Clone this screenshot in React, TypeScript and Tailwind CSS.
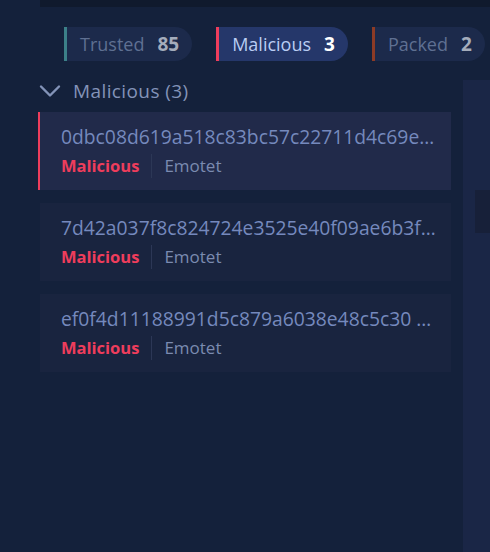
import React from "react";

type Tab = { label: string; count: number; bar: string; active?: boolean };

const tabs: Tab[] = [
  { label: "Trusted", count: 85, bar: "bg-[#3c8088]" },
  { label: "Malicious", count: 3, bar: "bg-[#ee3d5c]", active: true },
  { label: "Packed", count: 2, bar: "bg-[#8c3b26]" },
];

const samples = [
  { hash: "0dbc08d619a518c83bc57c22711d4c69e…", family: "Emotet", selected: true },
  { hash: "7d42a037f8c824724e3525e40f09ae6b3f…", family: "Emotet" },
  { hash: "ef0f4d11188991d5c879a6038e48c5c30 …", family: "Emotet" },
];

function Chevron() {
  return (
    <svg width="22" height="14" viewBox="0 0 22 14" fill="none">
      <path d="M2 2.5 L11 11.5 L20 2.5" stroke="#8393b8" strokeWidth="2.4" strokeLinecap="round" strokeLinejoin="round" />
    </svg>
  );
}

export default function App() {
  return (
    <div
      className="w-[490px] h-[552px] overflow-hidden bg-[#14213b] flex flex-col"
      style={{ fontFamily: '"Open Sans", "Noto Sans", sans-serif' }}
    >
      {/* top strip */}
      <div className="h-[7px] ml-[40px] bg-[#101a2d] shrink-0" />

      {/* verdict tabs */}
      <div className="flex gap-[24px] pl-[64px] pt-[20px] shrink-0">
        {tabs.map((t) => (
          <div
            key={t.label}
            className={`flex items-stretch h-[34px] rounded-r-full shrink-0 ${t.active ? "bg-[#25376a]" : "bg-[#1c2a4b]"}`}
          >
            <div className={`w-[3px] ${t.bar}`} />
            <div className="flex items-center pl-[13px] pr-[13px] gap-[13px] text-[18px] leading-none">
              <span className={t.active ? "text-[#b9cdf3]" : "text-[#5f7092]"}>{t.label}</span>
              <span className={`font-bold text-[19px] ${t.active ? "text-white" : "text-[#a4acbb]"}`}>{t.count}</span>
            </div>
          </div>
        ))}
      </div>

      <div className="flex flex-1 mt-[19px] min-h-0">
        <div className="flex flex-col w-[463px] shrink-0">
          {/* group header */}
          <div className="flex items-center h-[22px] pl-[39px] gap-[12px]">
            <Chevron />
            <span className="text-[19px] tracking-[0.4px] text-[#8393b8] leading-none">Malicious (3)</span>
          </div>

          {/* sample list */}
          <div className="flex flex-col gap-[13px] mt-[10px] pl-[38px] pr-[12px]">
            {samples.map((s, i) => (
              <div
                key={i}
                className={`flex h-[78px] ${s.selected ? "bg-[#212a4a]" : "bg-[#19243f] ml-[2px]"}`}
              >
                {s.selected && <div className="w-[2px] bg-[#ee3d5c] shrink-0" />}
                <div className="flex flex-col justify-center min-w-0 flex-1 pl-[21px] pr-[10px]">
                  <div className="text-[19.3px] leading-[26px] text-[#7589bd] whitespace-nowrap">{s.hash}</div>
                  <div className="flex items-center h-[24px] mt-[4px] text-[16.5px]">
                    <span className="font-bold text-[#ee3d5c]">Malicious</span>
                    <span className="w-px h-[24px] bg-[#2c3756] mx-[12px]" />
                    <span className="text-[#7b8bb0] text-[17px]">{s.family}</span>
                  </div>
                </div>
              </div>
            ))}
          </div>
        </div>

        {/* side panel */}
        <div className="flex-1 bg-[#1a2646] flex flex-col pt-[110px] pl-[12px]">
          <div className="h-[43px] bg-[#172039]" />
        </div>
      </div>
    </div>
  );
}
